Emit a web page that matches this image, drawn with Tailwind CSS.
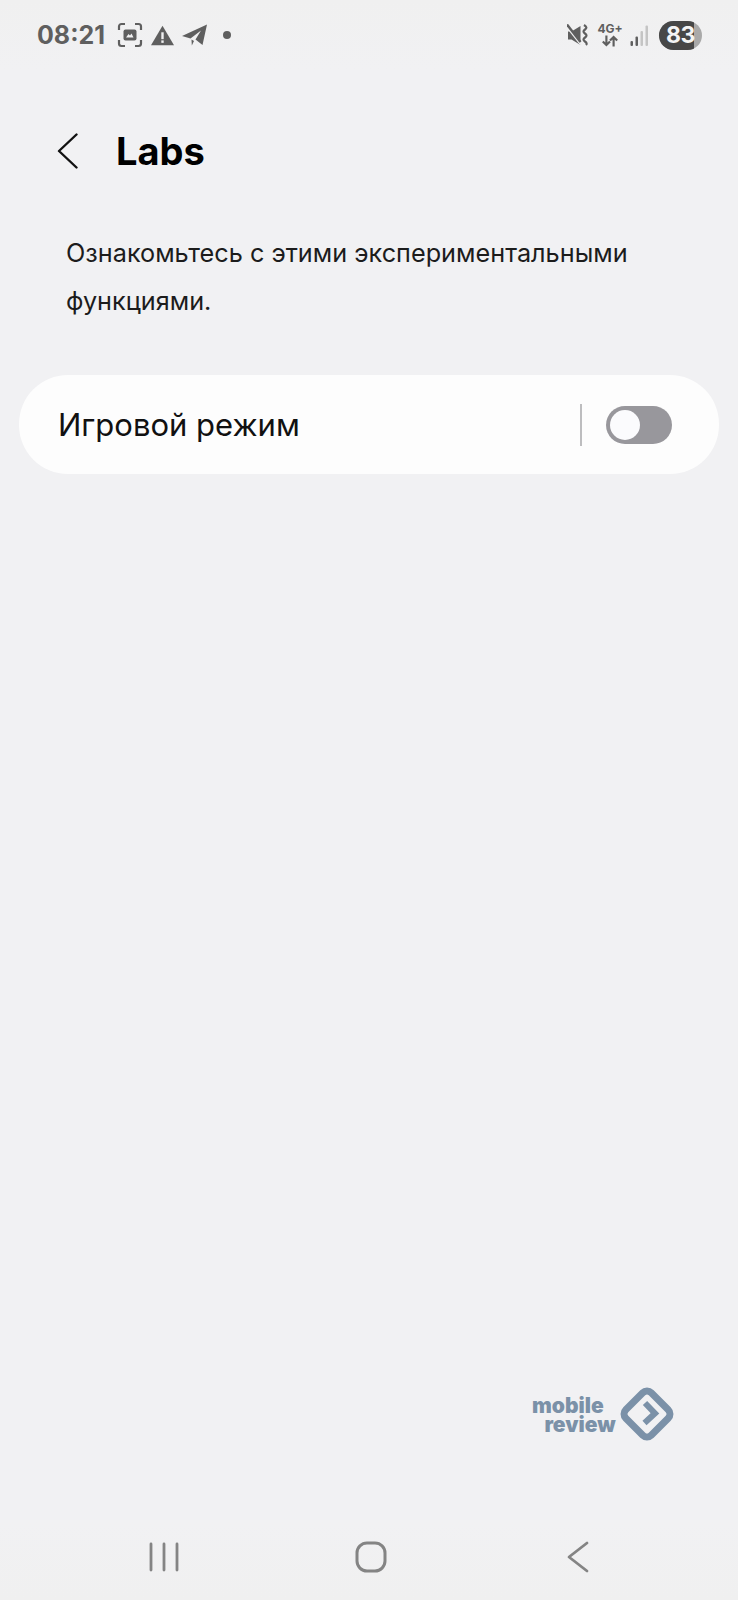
<!DOCTYPE html>
<html lang="ru">
<head>
<meta charset="UTF-8">
<meta name="viewport" content="width=device-width, initial-scale=1.0">
<title>Labs</title>
<script src="https://cdn.jsdelivr.net/npm/@tailwindcss/browser@4"></script>
</head>
<body class="bg-[#f1f1f3] font-[Inter,sans-serif]">
<div class="relative flex h-[1600px] w-[738px] flex-col overflow-hidden">

  <!-- status bar -->
  <div class="flex h-[70px] shrink-0 items-center justify-between bg-gradient-to-b from-[#f0f0f0] to-[#f1f1f3] pl-[37px] pr-[36px] text-[#5f5f5f]">
    <div class="flex items-center">
      <span class="text-[25px] font-bold leading-none">08:21</span>
      <svg class="ml-[12px]" width="26" height="26" viewBox="0 0 26 26" fill="none">
        <path d="M2 8V4.500A2.500 2.500 0 0 1 4.500 2H8M18 2h3.500A2.500 2.500 0 0 1 24 4.500V8M24 18v3.500a2.500 2.500 0 0 1-2.500 2.500H18M8 24H4.500A2.500 2.500 0 0 1 2 21.500V18" stroke="#5f5f5f" stroke-width="2.200"/>
        <rect x="6.500" y="7.500" width="13" height="11" rx="2" fill="#5f5f5f"/>
        <path d="M9 15.500l2.500-3.500 1.500 1.500 1.500-2 2 4z" fill="#f0f0f1"/>
      </svg>
      <svg class="ml-[8px]" width="23" height="21" viewBox="0 0 25 22">
        <path d="M12.500 0.500L25 21.500H0z" fill="#5f5f5f"/>
        <rect x="11.200" y="7.500" width="2.600" height="7.500" fill="#f0f0f1"/>
        <rect x="11.200" y="16.300" width="2.600" height="2.700" fill="#f0f0f1"/>
      </svg>
      <svg class="ml-[8px]" width="25" height="22" viewBox="0 0 25 22">
        <path d="M0 12L25 0.500 20.500 21 13.500 15.500 19 6.500 8.500 14.500z" fill="#5f5f5f"/>
        <path d="M9.500 15.500L12 17 9.800 21.500z" fill="#5f5f5f"/>
      </svg>
      <span class="ml-[16px] h-[8px] w-[8px] rounded-full bg-[#5f5f5f]"></span>
    </div>
    <div class="flex items-center">
      <!-- muted speaker with the vibrate wave -->
      <svg width="22" height="22" viewBox="0 0 22 22">
        <path d="M1 7.500h3.500L13.500 2v19L4.500 15.500H1z" fill="#5f5f5f"/>
        <path d="M-1 1.500L14 20.500" stroke="#f0f0f1" stroke-width="2.200"/>
        <path d="M0 0.500L13.500 18" stroke="#5f5f5f" stroke-width="2.400"/>
        <path d="M17 1c3 2 3 3 1 4.500s-2 2.500 0 4 2 2.500 0 4-2 2.500 0 4 2 2.500 1 3.500" fill="none" stroke="#5f5f5f" stroke-width="2.200"/>
      </svg>
      <div class="ml-[9px] flex w-[24px] flex-col items-center">
        <span class="text-[12px] font-bold leading-[12px] whitespace-nowrap">4G+</span>
        <svg width="18" height="12" viewBox="0 0 20 12" fill="none" stroke="#5f5f5f" stroke-width="2.400">
          <path d="M6 0v10M2 6.500l4 4 4-4M14 12V2M10 5.500l4-4 4 4"/>
        </svg>
      </div>
      <svg class="ml-[8px]" width="18" height="21" viewBox="0 0 18 21">
        <rect x="0.500" y="16" width="2.500" height="5" rx="1" fill="#5f5f5f"/>
        <rect x="5.500" y="11.500" width="2.500" height="9.500" rx="1" fill="#5f5f5f"/>
        <rect x="10.500" y="6" width="2.500" height="15" rx="1" fill="#c4c4c4"/>
        <rect x="15.500" y="0.500" width="2.500" height="20.500" rx="1" fill="#c4c4c4"/>
      </svg>
      <div class="relative ml-[11px] h-[29px] w-[43px] overflow-hidden rounded-full bg-[#a9a9a9]">
        <div class="flex h-full w-[35px] items-center bg-[#474747]"></div>
        <span class="absolute inset-0 flex items-center justify-center text-[23px] font-bold leading-none tracking-[-0.5px] text-[#f4f4f4]">83</span>
      </div>
    </div>
  </div>

  <!-- header -->
  <div class="mt-[40px] flex h-[82px] shrink-0 items-center pl-[57px]">
    <svg width="21" height="36" viewBox="0 0 21 36" fill="none">
      <path d="M19.500 1.500L2 18l17.500 16.500" stroke="#111" stroke-width="2.400" stroke-linecap="round" stroke-linejoin="round"/>
    </svg>
    <h1 class="ml-[38px] text-[38px] font-bold leading-none text-black">Labs</h1>
  </div>

  <!-- description -->
  <p class="mt-[37px] pl-[66px] pr-[80px] text-[25.25px] leading-[48px] text-[#1c1c1c]">Ознакомьтесь с этими экспериментальными функциями.</p>

  <!-- game mode row -->
  <div class="mx-[19px] mt-[50px] flex h-[99px] items-center rounded-[49px] bg-[#fdfdfd] pl-[39px] pr-[47px]">
    <span class="flex-1 text-[31px] leading-none text-[#111]">Игровой режим</span>
    <span class="h-[42px] w-[2px] bg-[#bdbdbf]"></span>
    <span class="ml-[24px] flex h-[38px] w-[66px] items-center rounded-full bg-[#98979c] pl-[4px]">
      <span class="h-[30px] w-[30px] rounded-full bg-[#fbfbfd]"></span>
    </span>
  </div>

  <!-- watermark -->
  <div class="absolute left-[532px] top-[1387px] flex items-center text-[#7b91a8]">
    <div class="mt-[2px] flex flex-col items-end text-[21px] font-black leading-[19px]">
      <span class="mr-[12px]">mobile</span>
      <span>review</span>
    </div>
    <svg class="ml-[4px]" width="54" height="54" viewBox="0 0 54 54" fill="none">
      <rect x="9" y="9" width="36" height="36" rx="6" transform="rotate(45 27 27)" stroke="#7b91a8" stroke-width="7"/>
      <path d="M25 16L35 26.300 24.500 36" stroke="#7b91a8" stroke-width="6"/>
    </svg>
  </div>

  <!-- navigation bar -->
  <div class="mt-auto flex h-[78px] shrink-0 items-start bg-gradient-to-b from-[#f1f1f3] to-[#f0f0f0] pt-[19px]">
    <div class="flex h-[32px] w-[738px] items-center justify-between pl-[149px] pr-[149px]">
      <svg width="30" height="30" viewBox="0 0 30 30" stroke="#848484" stroke-width="2.800" stroke-linecap="round">
        <path d="M2 2v26M15 2v26M28 2v26"/>
      </svg>
      <svg class="mr-[4px]" width="32" height="32" viewBox="0 0 32 32" fill="none">
        <rect x="2" y="2" width="28" height="28" rx="10" stroke="#848484" stroke-width="3"/>
      </svg>
      <svg width="22" height="32" viewBox="0 0 22 32" fill="none">
        <path d="M20 2L2 16l18 14" stroke="#848484" stroke-width="2.800" stroke-linecap="round" stroke-linejoin="round"/>
      </svg>
    </div>
  </div>

</div>
</body>
</html>
